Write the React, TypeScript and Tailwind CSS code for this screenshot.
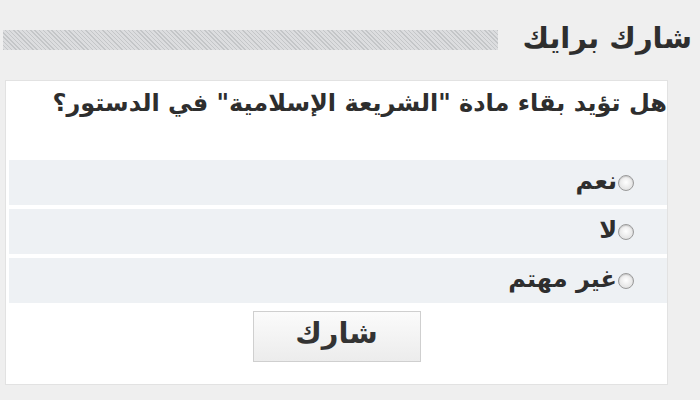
import React from 'react';

const options = ['نعم', 'لا', 'غير مهتم'];

function Radio() {
  return (
    <span className="inline-block w-[16px] h-[16px] rounded-full border border-[#9a9a9a] bg-[radial-gradient(circle_at_50%_45%,#ffffff_0,#e4e4e4_70%,#cfcfcf_100%)] shadow-[inset_0_1px_1px_rgba(0,0,0,0.15)] shrink-0" />
  );
}

export default function App() {
  return (
    <div
      dir="rtl"
      className="w-[700px] h-[400px] overflow-hidden bg-[#efefef] text-[#2e2e2e] font-['DejaVu_Sans','Liberation_Sans',sans-serif]"
    >
      <div className="flex items-center h-[80px] pr-[8px] pl-[3px] gap-[24px]">
        <h2 className="text-[29px] font-bold leading-none whitespace-nowrap pb-[4px]">شارك برايك</h2>
        <div className="flex-1 h-[20px] bg-[repeating-linear-gradient(45deg,#c4c6c8_0,#c4c6c8_1px,#dcdddf_1px,#dcdddf_3px)]" />
      </div>

      <div className="mr-[32px] ml-[5px] h-[305px] bg-white border border-[#e2e2e2] flex flex-col">
        <p className="text-[24px] font-bold leading-none pt-[10px] h-[79px] whitespace-nowrap">
          هل تؤيد بقاء مادة "الشريعة الإسلامية" في الدستور؟
        </p>
        <div className="flex flex-col gap-[4px] ml-[3px]">
          {options.map((o) => (
            <label
              key={o}
              className="h-[45px] bg-[#eef1f4] flex items-center gap-[1px] pr-[33px] text-[24px] font-bold"
            >
              <Radio />
              <span className="pb-[4px]">{o}</span>
            </label>
          ))}
        </div>
        <div className="flex justify-center pt-[8px]">
          <button className="w-[168px] h-[51px] border border-[#cfcfcf] bg-[linear-gradient(#fbfbfb,#ececec)] text-[29px] font-bold text-[#333] pb-[5px]">
            شارك
          </button>
        </div>
      </div>
    </div>
  );
}
